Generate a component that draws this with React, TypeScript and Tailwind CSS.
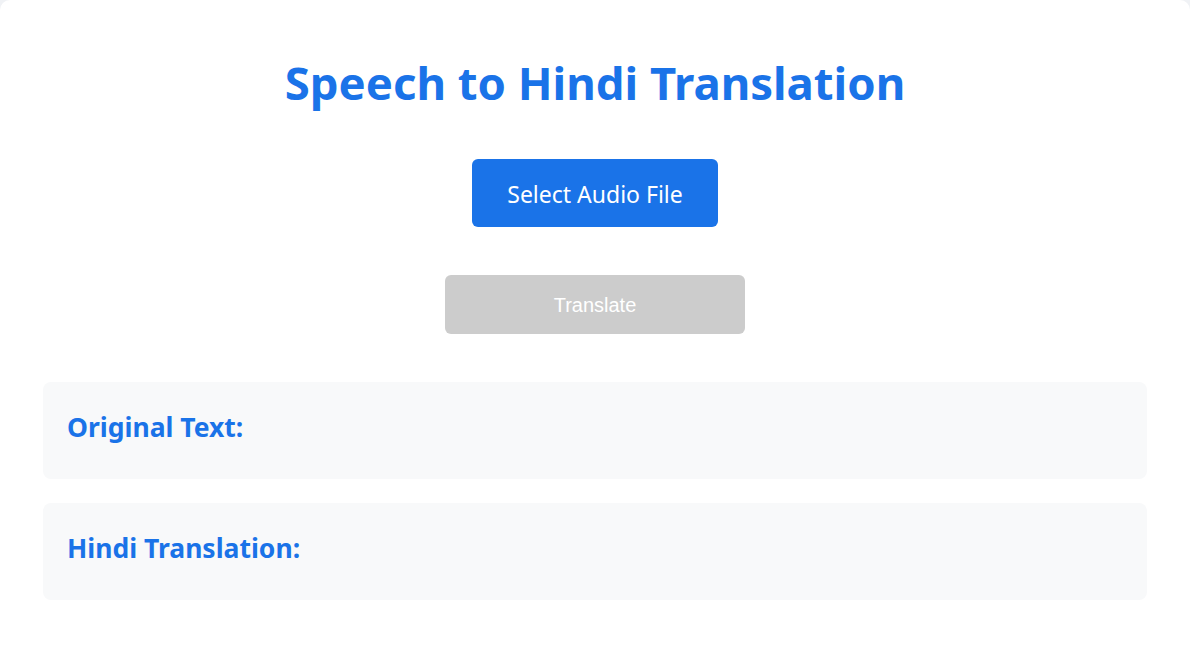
import React from 'react';

const ResultBox: React.FC<{ title: string }> = ({ title }) => (
  <div className="bg-[#f8f9fa] rounded-lg px-6 pb-[6px] h-[97px] flex items-center">
    <h3 className="text-[26.5px] font-bold text-[#1a73e8] leading-tight">{title}</h3>
  </div>
);

export default function App() {
  return (
    <div className="min-h-screen bg-[#f0f2f5] font-['Noto_Sans',sans-serif]">
      <div className="bg-white rounded-[10px] min-h-[680px] px-[43px] pt-[49px]">
        <h1 className="text-center text-[45.5px] font-bold text-[#1a73e8] leading-[66px]">
          Speech to Hindi Translation
        </h1>

        <div className="flex justify-center mt-[44px]">
          <button className="w-[246px] h-[68px] pt-[3px] bg-[#1a73e8] text-white rounded-md text-[23px]">
            Select Audio File
          </button>
        </div>

        <div className="flex justify-center mt-[48px]">
          <button
            disabled
            className="w-[300px] h-[59px] bg-[#cccccc] text-white rounded-md text-[20px] font-['Liberation_Sans',sans-serif]"
          >
            Translate
          </button>
        </div>

        <div className="mt-[48px] flex flex-col gap-[24px]">
          <ResultBox title="Original Text:" />
          <ResultBox title="Hindi Translation:" />
        </div>
      </div>
    </div>
  );
}
